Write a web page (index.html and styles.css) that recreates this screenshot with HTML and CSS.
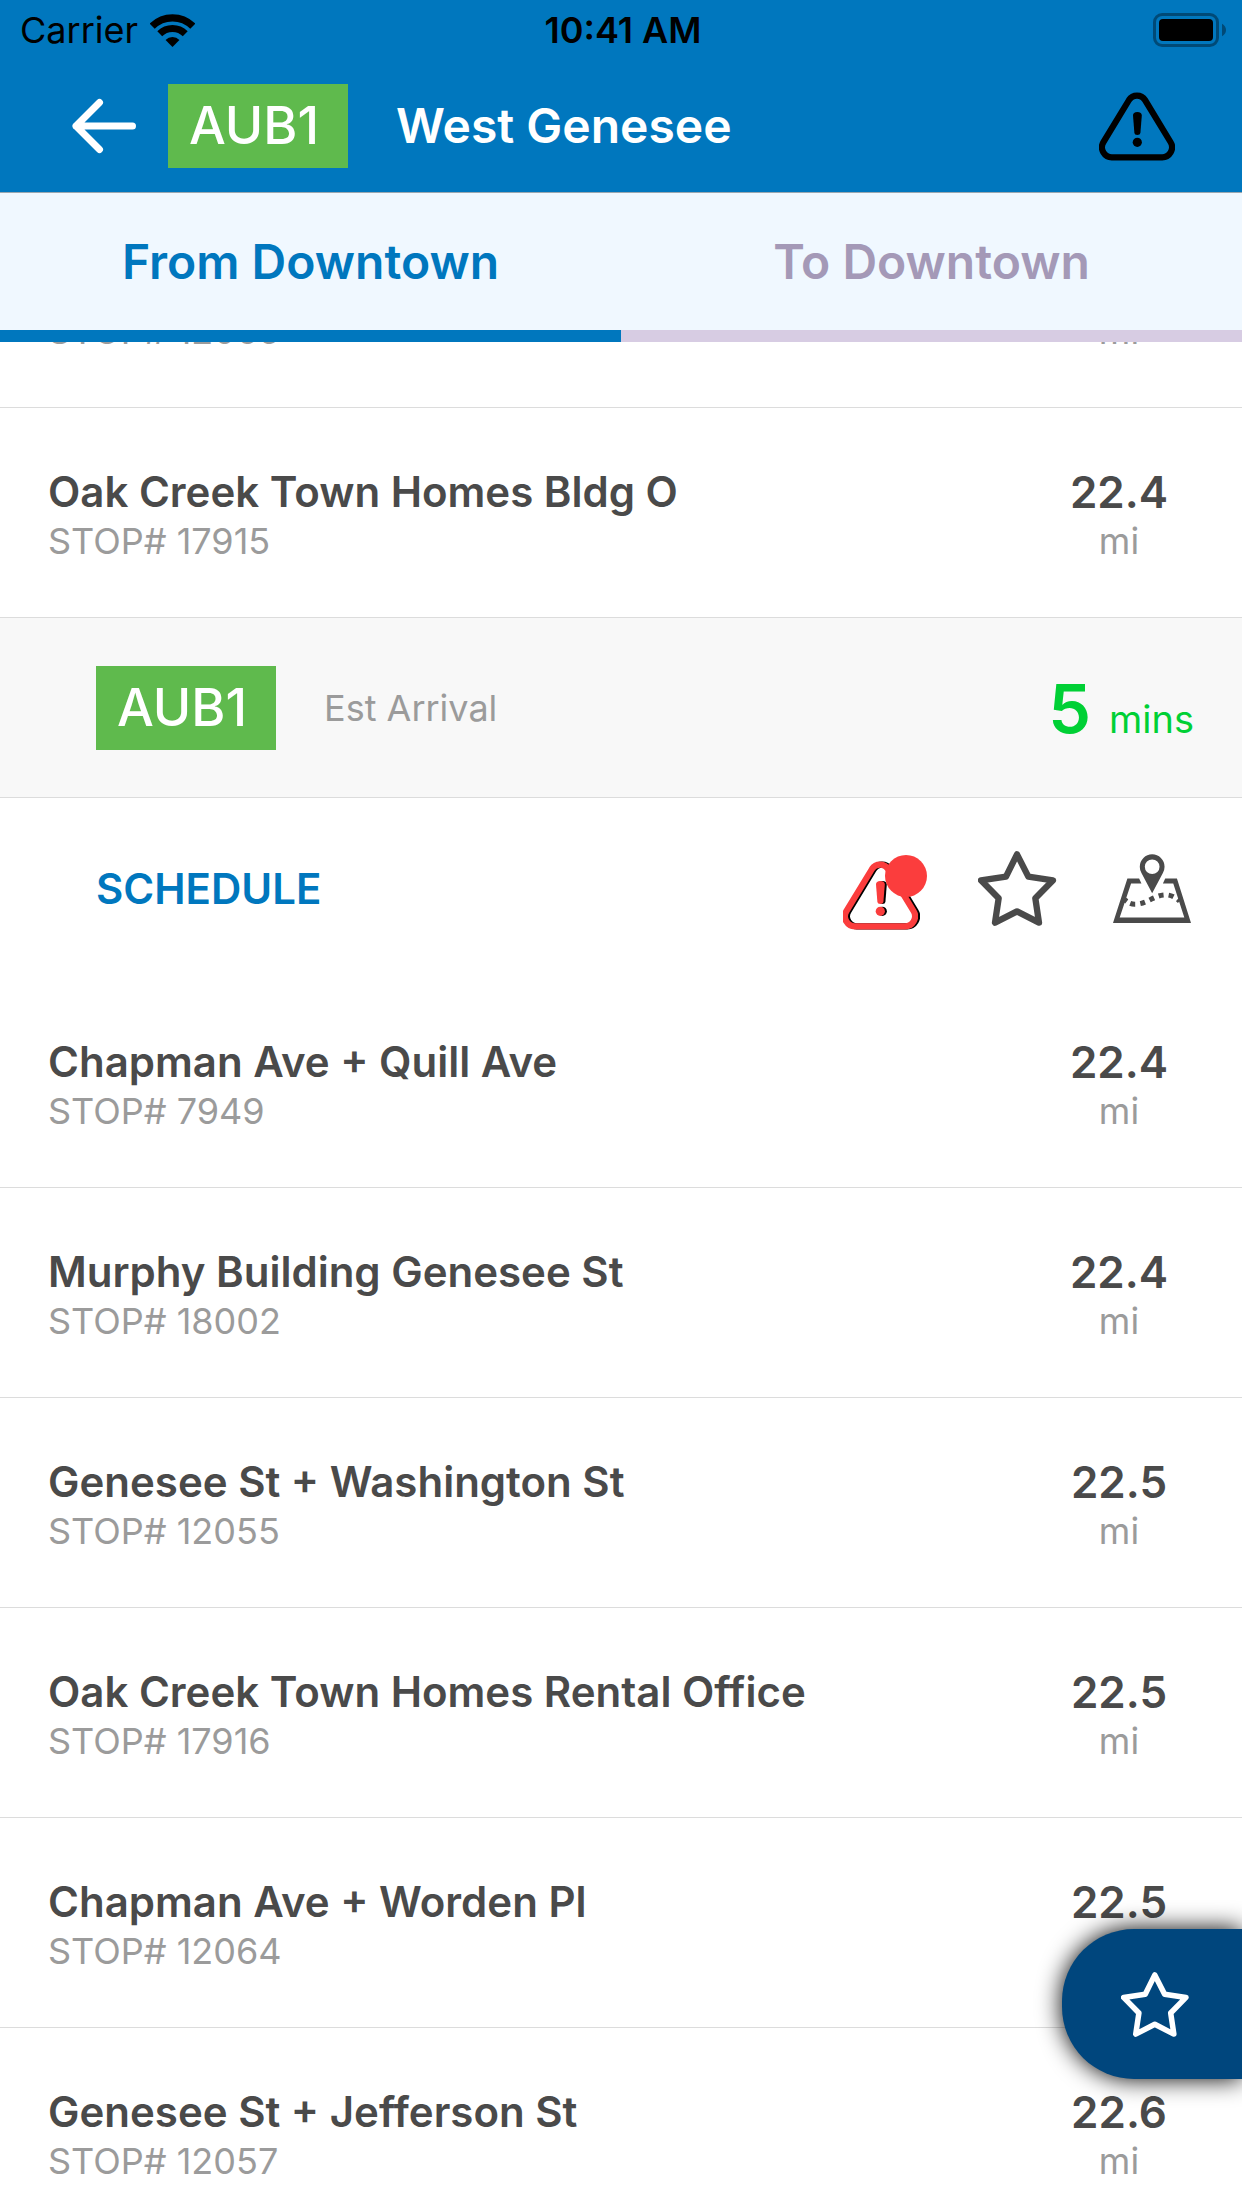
FILE: index.html
```html
<!DOCTYPE html>
<html lang="en">
<head>
<meta charset="utf-8">
<meta name="viewport" content="width=device-width, initial-scale=1">
<title>West Genesee</title>
<link rel="stylesheet" href="styles.css">
</head>
<body>
<svg class="defs" aria-hidden="true">
  <symbol id="star" viewBox="474 631 234 225" preserveAspectRatio="xMinYMid meet">
    <path d="M591 641L625 708L699 719L646 773L657 846L591 812L525 846L536 773L483 719L558 708Z" fill="none" stroke="currentColor" stroke-width="19" stroke-linejoin="round"/>
  </symbol>
  <symbol id="warning" viewBox="0 0 76 70">
    <path d="M30 9A9.4 9.4 0 0 1 46 9L71.5 51A10 10 0 0 1 62.5 66.3H13.5A10 10 0 0 1 4.5 51Z" fill="none" stroke="currentColor" stroke-width="6.2"/>
    <path d="M34 24.5Q34 21 38.3 21Q42.8 21 42.8 24.5L41.4 42Q41.2 44 38.3 44Q35.6 44 35.4 42Z" fill="currentColor"/>
    <circle cx="38.3" cy="51.3" r="4.6" fill="currentColor"/>
  </symbol>
</svg>
<div class="app">
  <div class="status-bar">
    <div class="carrier">
      <span>Carrier</span>
      <svg width="45" height="33" viewBox="448 39 136 99" aria-hidden="true">
        <path d="M454.500 75.500A87 87 0 0 1 577.500 75.500" fill="none" stroke="#000" stroke-width="22"/>
        <path d="M477.500 98.500A54.500 54.500 0 0 1 554.500 98.500" fill="none" stroke="#000" stroke-width="21"/>
        <path d="M516 138L495 117A30 30 0 0 1 537 117Z"/>
      </svg>
    </div>
    <time class="clock">10:41 AM</time>
    <svg class="battery" width="73" height="34" viewBox="339 39 219 102" aria-hidden="true">
      <rect x="343.500" y="43.500" width="189" height="93" rx="23" fill="none" stroke="#004a77" stroke-width="9"/>
      <rect x="357" y="57" width="162" height="66" rx="12"/>
      <path d="M546 71Q558 78 558 90T546 109Z" fill="#004a77"/>
    </svg>
  </div>

  <header class="header">
    <button class="icon-button" type="button" aria-label="Back">
      <svg width="64" height="56" viewBox="0 0 64 56"><path d="M27.500 4.500L4 28L27.500 51.500M4 28H60.500" fill="none" stroke="currentColor" stroke-width="7" stroke-linecap="round" stroke-linejoin="round"/></svg>
    </button>
    <span class="route-badge">AUB1</span>
    <h1 class="title">West Genesee</h1>
    <button class="icon-button header-alert" type="button" aria-label="Alerts">
      <svg width="76" height="70"><use href="#warning"/></svg>
    </button>
  </header>

  <div class="tabs" role="tablist">
    <button class="tab tab-active" type="button" role="tab" aria-selected="true">From Downtown</button>
    <button class="tab" type="button" role="tab" aria-selected="false">To Downtown</button>
  </div>

  <main class="stops-view">
    <ul class="stops">
      <li class="stop">
        <div class="stop-info"><span class="stop-name"></span><span class="stop-id">STOP# 12065</span></div>
        <div class="distance"><span class="distance-value"></span><span class="distance-unit">mi</span></div>
      </li>
      <li class="stop">
        <div class="stop-info"><span class="stop-name">Oak Creek Town Homes Bldg O</span><span class="stop-id">STOP# 17915</span></div>
        <div class="distance"><span class="distance-value">22.4</span><span class="distance-unit">mi</span></div>
      </li>
      <li class="stop-details">
        <div class="arrival">
          <span class="route-badge">AUB1</span>
          <span class="arrival-label">Est Arrival</span>
          <div class="arrival-time"><span class="arrival-value">5</span><span class="arrival-unit">mins</span></div>
        </div>
        <div class="actions">
          <button class="schedule" type="button">SCHEDULE</button>
          <button class="icon-button" type="button" aria-label="Stop alerts">
            <svg width="84" height="84" viewBox="0 -9 84 84">
              <svg x="1" y="5" width="76" height="70" color="#000"><use href="#warning"/></svg>
              <svg x="-1" y="5" width="76" height="70" overflow="visible" color="#fb3d3d"><use href="#warning"/></svg>
              <circle cx="63" cy="21" r="21" fill="#fb3d3d"/>
            </svg>
          </button>
          <button class="icon-button" type="button" aria-label="Add to favorites">
            <svg width="84" height="75"><use href="#star"/></svg>
          </button>
          <button class="icon-button" type="button" aria-label="Show on map">
            <svg width="78" height="69" viewBox="879 644 233 206">
              <path d="M922 717H957L964 732H933L899 834H1092L1059 732H1028L1035 717H1070L1112 850H879Z" fill="currentColor"/>
              <path fill-rule="evenodd" d="M996 761L964 701Q959 692 959 682A37 37 0 0 1 1033 682Q1033 692 1028 701ZM996 660A22 22 0 1 0 996 704A22 22 0 1 0 996 660Z" fill="currentColor"/>
              <path d="M914 780Q926 793 944 794C982 794 1002 766 1036 766Q1060 766 1082 789" fill="none" stroke="currentColor" stroke-width="15" stroke-dasharray="8 12 15 15 15 15 15 15 15 15 15 15"/>
            </svg>
          </button>
        </div>
      </li>
      <li class="stop">
        <div class="stop-info"><span class="stop-name">Chapman Ave + Quill Ave</span><span class="stop-id">STOP# 7949</span></div>
        <div class="distance"><span class="distance-value">22.4</span><span class="distance-unit">mi</span></div>
      </li>
      <li class="stop">
        <div class="stop-info"><span class="stop-name">Murphy Building Genesee St</span><span class="stop-id">STOP# 18002</span></div>
        <div class="distance"><span class="distance-value">22.4</span><span class="distance-unit">mi</span></div>
      </li>
      <li class="stop">
        <div class="stop-info"><span class="stop-name">Genesee St + Washington St</span><span class="stop-id">STOP# 12055</span></div>
        <div class="distance"><span class="distance-value">22.5</span><span class="distance-unit">mi</span></div>
      </li>
      <li class="stop">
        <div class="stop-info"><span class="stop-name">Oak Creek Town Homes Rental Office</span><span class="stop-id">STOP# 17916</span></div>
        <div class="distance"><span class="distance-value">22.5</span><span class="distance-unit">mi</span></div>
      </li>
      <li class="stop">
        <div class="stop-info"><span class="stop-name">Chapman Ave + Worden Pl</span><span class="stop-id">STOP# 12064</span></div>
        <div class="distance"><span class="distance-value">22.5</span></div>
      </li>
      <li class="stop">
        <div class="stop-info"><span class="stop-name">Genesee St + Jefferson St</span><span class="stop-id">STOP# 12057</span></div>
        <div class="distance"><span class="distance-value">22.6</span><span class="distance-unit">mi</span></div>
      </li>
    </ul>
  </main>

  <button class="favorites" type="button" aria-label="Favorites">
    <svg width="68" height="65"><use href="#star"/></svg>
  </button>
</div>
</body>
</html>
```
FILE: styles.css
```css
* { box-sizing: border-box; }

body {
  margin: 0;
  background: #fff;
  color: #4a4a4a;
  font-family: Inter, "Liberation Sans", sans-serif;
}

button {
  margin: 0;
  padding: 0;
  border: 0;
  background: none;
  color: inherit;
  font: inherit;
}

svg { display: block; }

.defs {
  position: absolute;
  width: 0;
  height: 0;
}

.app {
  position: relative;
  display: flex;
  flex-direction: column;
  height: 100vh;
  overflow: hidden;
}

.status-bar {
  flex: none;
  display: grid;
  grid-template-columns: 1fr auto 1fr;
  align-items: center;
  height: 60px;
  padding: 0 16px 0 20px;
  background: #0077be;
  color: #000;
  font-size: 36px;
  line-height: 48px;
}

.carrier {
  display: flex;
  align-items: center;
  gap: 12px;
}

.clock { font-weight: 600; }

.battery { justify-self: end; }

.header {
  flex: none;
  display: flex;
  align-items: center;
  height: 133px;
  padding: 0 67px 0 72px;
  border-bottom: 1px solid #9aa7b0;
  background: #0077be;
  color: #fff;
}

.icon-button { flex: none; }

.route-badge {
  flex: none;
  width: 180px;
  padding-left: 21px;
  background: #5fba4d;
  color: #fff;
  font-size: 52px;
  font-weight: 500;
  line-height: 84px;
}

.header .route-badge { margin-left: 32px; }

.title {
  flex: 1;
  margin: 0 0 0 48px;
  font-size: 48px;
  font-weight: 600;
  line-height: 60px;
}

.header-alert { color: #000; }

.tabs {
  flex: none;
  display: flex;
  background: #f0f8ff;
}

.tab {
  flex: 1;
  height: 149px;
  border-bottom: 12px solid #d7cce3;
  color: #a499b7;
  font-size: 48px;
  font-weight: 600;
}

.tab-active {
  border-color: #0077be;
  color: #0077be;
}

.stops-view {
  flex: 1;
  min-height: 0;
  overflow: hidden;
}

/* The list is scrolled part of the way through its first stop. */
.stops {
  margin: -144px 0 0;
  padding: 0;
  list-style: none;
}

.stop {
  display: flex;
  justify-content: space-between;
  padding: 60px 48px 51px;
  border-bottom: 1px solid #dcdcdc;
}

.stop-info,
.distance {
  display: flex;
  flex-direction: column;
}

.stop-name,
.distance-value {
  min-height: 48px;
  font-size: 42px;
  font-weight: 600;
  line-height: 48px;
}

.distance {
  width: 150px;
  text-align: center;
}

.distance-value { font-size: 44px; }

.stop-id,
.distance-unit {
  color: #9b9b9b;
  font-size: 36px;
  line-height: 50px;
}

.arrival {
  display: flex;
  align-items: center;
  height: 180px;
  padding: 0 48px 0 96px;
  border-bottom: 1px solid #dcdcdc;
  background: #f8f8f8;
}

.arrival-label {
  flex: 1;
  margin-left: 48px;
  color: #9b9b9b;
  font-size: 36px;
}

.arrival-time {
  display: flex;
  align-items: baseline;
  gap: 18px;
  color: #00d035;
}

.arrival-value {
  font-size: 68px;
  font-weight: 600;
  line-height: 84px;
}

.arrival-unit { font-size: 38px; }

.actions {
  display: flex;
  align-items: center;
  gap: 51px;
  height: 180px;
  padding: 0 51px 0 96px;
}

.schedule {
  margin-right: auto;
  color: #0077be;
  font-size: 42px;
  font-weight: 600;
}

.favorites {
  position: absolute;
  right: 0;
  bottom: 129px;
  width: 180px;
  height: 150px;
  padding-left: 59px;
  border-radius: 72px 0 0 72px;
  background: #00467d;
  box-shadow: 0 0 24px #000;
  color: #fff;
}
```
